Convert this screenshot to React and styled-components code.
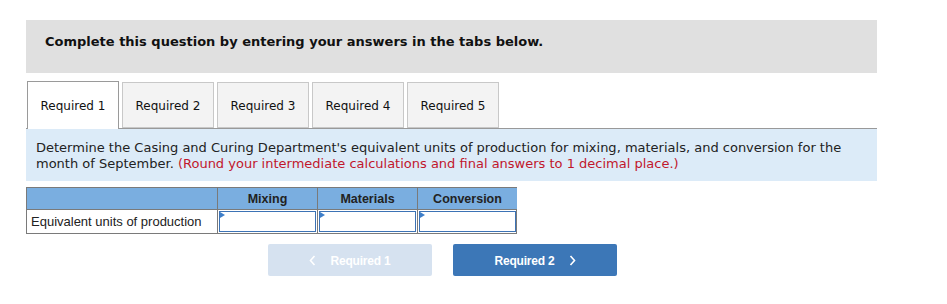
import React from "react";
import styled, { createGlobalStyle } from "styled-components";

const Global = createGlobalStyle`
  html, body { margin: 0; padding: 0; background: #fff; }
  body { font-family: "DejaVu Sans", Verdana, sans-serif; color: #222; }
`;

const Page = styled.div`
  padding: 20px 0 0 26px;
  width: 851px;
`;

const Banner = styled.div`
  background: #e0e0e0;
  height: 53px;
  box-sizing: border-box;
  padding: 14px 0 0 19px;
  font-weight: bold;
  font-size: 13px;
  color: #111;
`;

const TabBar = styled.div`
  display: flex;
  align-items: flex-end;
  gap: 3px;
  margin-top: 8px;
  height: 47px;
  border-bottom: 1px solid #999;
  padding-left: 1px;
`;

const Tab = styled.div`
  width: 92px;
  height: ${(p) => (p.$active ? "48px" : "46px")};
  margin-bottom: ${(p) => (p.$active ? "-1px" : "0")};
  box-sizing: border-box;
  border: 1px solid ${(p) => (p.$active ? "#9a9a9a" : "#c8c8c8")};
  border-bottom: ${(p) => (p.$active ? "none" : "1px solid #c8c8c8")};
  background: ${(p) => (p.$active ? "#fff" : "#f3f3f3")};
  display: flex;
  align-items: center;
  justify-content: center;
  padding-top: 1px;
  font-size: 12px;
  color: #111;
`;

const Info = styled.div`
  background: #dcebf8;
  padding: 11px 10px 10px 10px;
  font-size: 13px;
  line-height: 16px;
  color: #222;
  height: 52px;
  box-sizing: border-box;
`;

const Red = styled.span`
  color: #c1172c;
`;

const Table = styled.div`
  margin-top: 6px;
  display: grid;
  grid-template-columns: 190px 100px 100px 100px;
  width: 491px;
  border: 1px solid #7a7a7a;
  box-sizing: border-box;
  font-family: "Liberation Sans", Arial, sans-serif;
`;

const HeadCell = styled.div`
  background: #7aaee0;
  height: 22px;
  box-sizing: border-box;
  border-left: ${(p) => (p.$first ? "none" : "1px solid #7a7a7a")};
  border-bottom: 1px solid #7a7a7a;
  display: flex;
  align-items: center;
  justify-content: center;
  font-weight: bold;
  font-size: 12.5px;
  color: #222;
`;

const LabelCell = styled.div`
  height: 23px;
  display: flex;
  align-items: center;
  padding-left: 4px;
  font-size: 13px;
  color: #222;
`;

const InputCell = styled.div`
  position: relative;
  height: 23px;
  box-sizing: border-box;
  border-left: 1px solid #7a7a7a;
  padding: 1px;
`;

const Input = styled.div`
  height: 100%;
  box-sizing: border-box;
  border: 1px solid #3d73b5;
  background: #fff;
`;

const Corner = styled.div`
  position: absolute;
  left: 2px;
  top: 2px;
  width: 0;
  height: 0;
  border-top: 3px solid transparent;
  border-bottom: 3px solid transparent;
  border-left: 5px solid #3f7fc9;
`;

const Nav = styled.div`
  display: flex;
  gap: 21px;
  margin-top: 10px;
  padding-left: 242px;
`;

const NavButton = styled.div`
  width: 164px;
  height: 32px;
  border-radius: 2px;
  background: ${(p) => (p.$disabled ? "#d6e2f0" : "#3c77b7")};
  color: #fff;
  display: flex;
  align-items: center;
  justify-content: center;
  gap: 14px;
  padding-top: 1px;
  box-sizing: border-box;
  font-family: "Liberation Sans", Arial, sans-serif;
  font-weight: bold;
  font-size: 12px;
  letter-spacing: -0.2px;
`;

const Chevron = ({ dir }) => (
  <svg width="7" height="11" viewBox="0 0 7 11" fill="none">
    <path
      d={dir === "left" ? "M5.5 1 L1.5 5.5 L5.5 10" : "M1.5 1 L5.5 5.5 L1.5 10"}
      stroke="#fff"
      strokeWidth="1.6"
    />
  </svg>
);

export default function App() {
  const tabs = ["Required 1", "Required 2", "Required 3", "Required 4", "Required 5"];
  return (
    <Page>
      <Global />
      <Banner>Complete this question by entering your answers in the tabs below.</Banner>
      <TabBar>
        {tabs.map((t, i) => (
          <Tab key={t} $active={i === 0}>
            {t}
          </Tab>
        ))}
      </TabBar>
      <Info>
        Determine the Casing and Curing Department's equivalent units of production for mixing, materials, and conversion for the
        month of September. <Red>(Round your intermediate calculations and final answers to 1 decimal place.)</Red>
      </Info>
      <Table>
        <HeadCell $first />
        <HeadCell>Mixing</HeadCell>
        <HeadCell>Materials</HeadCell>
        <HeadCell>Conversion</HeadCell>
        <LabelCell>Equivalent units of production</LabelCell>
        {[0, 1, 2].map((k) => (
          <InputCell key={k}>
            <Input />
            <Corner />
          </InputCell>
        ))}
      </Table>
      <Nav>
        <NavButton $disabled>
          <Chevron dir="left" />
          <span>Required 1</span>
        </NavButton>
        <NavButton>
          <span>Required 2</span>
          <Chevron dir="right" />
        </NavButton>
      </Nav>
    </Page>
  );
}
